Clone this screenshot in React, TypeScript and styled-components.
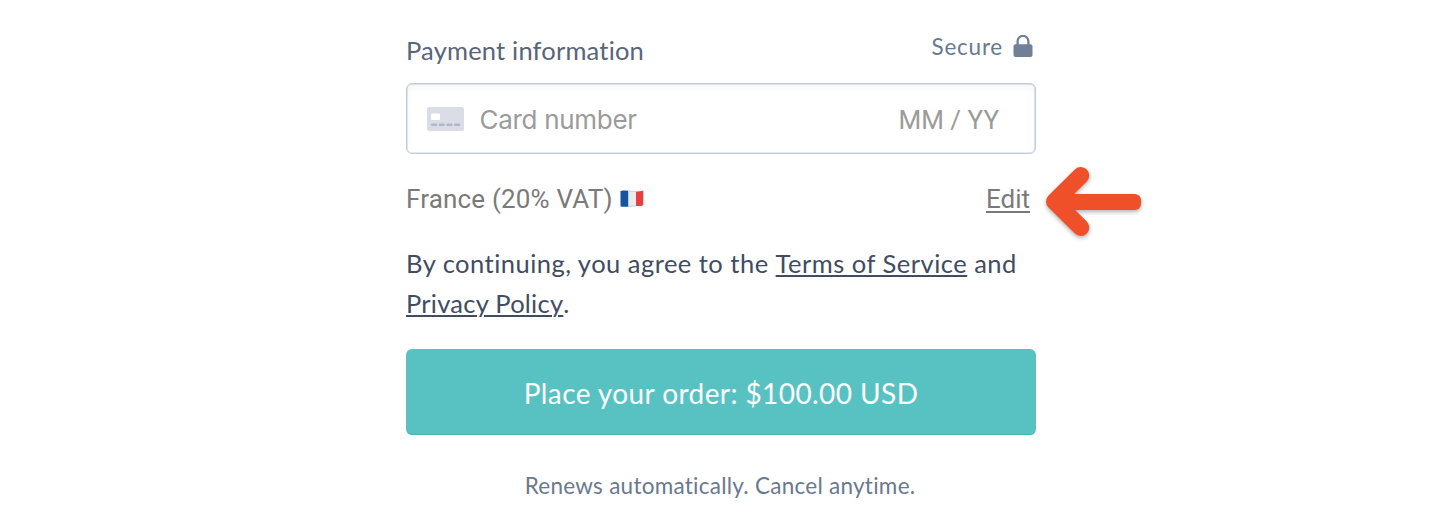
import React from "react";
import styled, { createGlobalStyle } from "styled-components";

const Global = createGlobalStyle`
  *, *::before, *::after { box-sizing: border-box; }
  body { margin: 0; background: #fff; font-family: Lato, sans-serif; }
`;

const Page = styled.main`
  display: flex;
  justify-content: center;
  height: 530px;
  padding-left: 2px;
  overflow: hidden;
`;

const Form = styled.form`
  display: flex;
  flex-direction: column;
  width: 630px;
  padding-top: 31px;
`;

const Header = styled.div`
  display: flex;
  justify-content: space-between;
  height: 52px;
`;

const Title = styled.h2`
  margin: 4px 0 0;
  font-size: 25.5px;
  font-weight: 400;
  line-height: 30px;
  letter-spacing: 0.19px;
  color: #58647a;
`;

const Secure = styled.div`
  display: flex;
  align-items: flex-start;
  gap: 10px;
  padding-right: 3px;
  font-size: 22.5px;
  line-height: 32px;
  letter-spacing: 0.75px;
  color: #69798f;

  svg { margin-top: 4px; }
`;

const CardField = styled.div`
  display: flex;
  align-items: center;
  height: 71px;
  padding: 1px 36px 0 20px;
  border: 1px solid #c0ccda;
  border-radius: 6px;
  box-shadow: inset 0 4px 7px rgba(0, 0, 0, 0.04), inset 0 0 0 0.5px #c9d3df;
  color: #9b9b9b;
  font-size: 26px;
  line-height: 34px;
`;

const CardNumber = styled.span`
  flex: 1;
  margin-left: 15.5px;
  padding-top: 1px;
  font-family: Inter, sans-serif;
  letter-spacing: -0.3px;
`;

const Expiry = styled.span`
  padding-top: 1px;
  font-family: Roboto, sans-serif;
`;

const Country = styled.div`
  display: flex;
  align-items: center;
  height: 90px;
  padding-right: 6px;
  font-family: Roboto, sans-serif;
  font-size: 26px;
  letter-spacing: 0.18px;
  color: #7a7a7a;

  svg { margin-left: 7.5px; }
`;

const EditLink = styled.a`
  margin-left: auto;
  color: inherit;
  text-decoration: underline;
  text-decoration-thickness: 2px;
  text-underline-offset: 3px;
  letter-spacing: 0;
`;

const Terms = styled.p`
  margin: -1px 0 0;
  height: 106px;
  font-size: 25.5px;
  line-height: 40px;
  letter-spacing: 0.48px;
  color: #414c63;
`;

const TermsLink = styled.a<{ $spacing?: number }>`
  color: inherit;
  letter-spacing: ${({ $spacing = 0.5 }) => $spacing}px;
  text-decoration: underline;
  text-decoration-thickness: 2px;
  text-underline-offset: 2px;
`;

const OrderButton = styled.button`
  height: 86px;
  flex: none;
  padding: 2px 0 0;
  border: 0;
  border-bottom: 1px solid #43b8b9;
  border-radius: 6px;
  background: #58c2c3;
  color: #fff;
  font: 400 28px Lato, sans-serif;
  letter-spacing: 0.42px;
`;

const Renewal = styled.p`
  margin: 35px 0 0;
  padding-right: 2px;
  font-size: 22.5px;
  line-height: 32px;
  letter-spacing: 0.26px;
  text-align: center;
  color: #69798f;
`;

const Pointer = styled.svg`
  position: absolute;
  left: 1040px;
  top: 160px;
  filter: drop-shadow(0 2px 2px rgba(0, 0, 0, 0.3));
`;

const LockIcon = () => (
  <svg width="20" height="23" viewBox="0 0 20 23" fill="none">
    <path d="M4.6 10V6.3a5.4 5.4 0 0 1 10.8 0V10" stroke="#6f8097" strokeWidth="2.3" />
    <rect x="0.5" y="9.3" width="19" height="12.7" rx="2" fill="#6f8097" />
  </svg>
);

const CardIcon = () => (
  <svg width="37" height="24" viewBox="0 0 37 24">
    <rect width="37" height="24" rx="2.5" fill="#dadde6" />
    <rect x="4" y="6.5" width="9" height="6.5" rx="1.2" fill="#fff" />
    <g fill="#afb7c8">
      {[4, 11.7, 19.3, 27].map((x) => (
        <rect key={x} x={x} y="16.5" width="6.2" height="2.6" rx="1.1" />
      ))}
    </g>
  </svg>
);

const FlagIcon = () => (
  <svg width="24" height="18" viewBox="0 0 24 18">
    <defs>
      <clipPath id="flag">
        <path d="M.5 1C4 .3 7.500 .5 11.800 1.200S20 1.300 23.300.400V15.300C20 16.500 16 15.800 12 16.200S4 17.200.5 16.600Z" />
      </clipPath>
    </defs>
    <g clipPath="url(#flag)">
      <rect width="8.500" height="18" fill="#17539f" />
      <rect x="8.500" width="8" height="18" fill="#e9ebef" />
      <rect x="16" width="8" height="18" fill="#e4403d" />
    </g>
    <path d="M8.500 .9C12 1.500 14 1.500 16 1.300M8.500 16.500C11 16.300 13 16 16 16" fill="none" stroke="#b9bcc2" strokeWidth="0.700" />
  </svg>
);

export default function App() {
  return (
    <>
      <Global />
      <Page>
        <Form onSubmit={(e) => e.preventDefault()}>
          <Header>
            <Title>Payment information</Title>
            <Secure>
              Secure
              <LockIcon />
            </Secure>
          </Header>
          <CardField>
            <CardIcon />
            <CardNumber>Card number</CardNumber>
            <Expiry>MM / YY</Expiry>
          </CardField>
          <Country>
            France (20% VAT)
            <FlagIcon />
            <EditLink>Edit</EditLink>
          </Country>
          <Terms>
            By continuing, you agree to the <TermsLink>Terms of Service</TermsLink> and{" "}
            <TermsLink $spacing={0.25}>Privacy Policy</TermsLink>.
          </Terms>
          <OrderButton type="submit">Place your order: $100.00 USD</OrderButton>
          <Renewal>Renews automatically. Cancel anytime.</Renewal>
        </Form>
        <Pointer width="110" height="90" viewBox="0 0 110 90">
          <path d="M40.800 15.500L14.500 41.500L40.800 67.500" fill="none" stroke="#f05029" strokeWidth="17" strokeLinecap="round" strokeLinejoin="round" />
          <rect x="14" y="34" width="87" height="16" rx="6" fill="#f05029" />
        </Pointer>
      </Page>
    </>
  );
}
